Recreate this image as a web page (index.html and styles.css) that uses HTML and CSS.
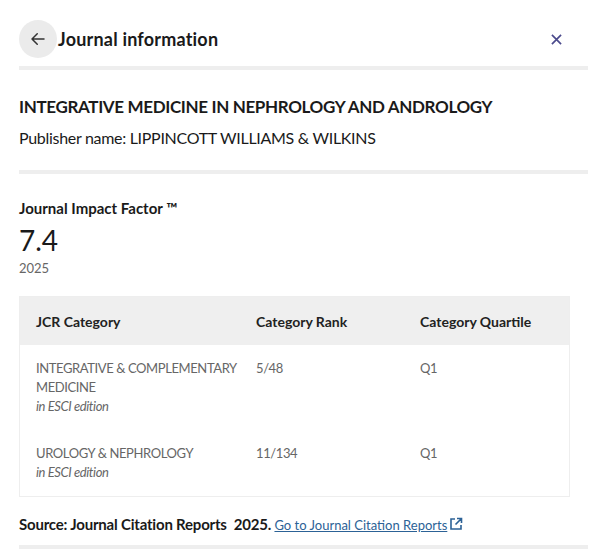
FILE: index.html
```html
<!DOCTYPE html>
<html lang="en">
<head>
    <meta charset="UTF-8">
    <title>Journal information</title>
    <link rel="stylesheet" href="styles.css">
</head>
<body>
    <div class="panel">
        <div class="header">
            <button class="back-btn" aria-label="Back">
                <svg width="18" height="18" viewBox="0 0 24 24"><path d="M20 12H5M11 5l-7 7 7 7" fill="none" stroke="#333" stroke-width="2" stroke-linecap="round" stroke-linejoin="round"/></svg>
            </button>
            <h1 class="title">Journal information</h1>
            <button class="close-btn" aria-label="Close">
                <svg width="11" height="11" viewBox="0 0 12 12"><path d="M1 1l10 10M11 1L1 11" stroke="#4b4a8c" stroke-width="1.8"/></svg>
            </button>
        </div>

        <div class="journal">
            <h2 class="journal-name">INTEGRATIVE MEDICINE IN NEPHROLOGY AND ANDROLOGY</h2>
            <p class="publisher">Publisher name: LIPPINCOTT WILLIAMS &amp; WILKINS</p>
        </div>

        <div class="impact">
            <h3 class="impact-label">Journal Impact Factor ™</h3>
            <div class="impact-value">7.4</div>
            <div class="impact-year">2025</div>

            <table class="jcr">
                <thead>
                    <tr>
                        <th class="col-cat">JCR Category</th>
                        <th class="col-rank">Category Rank</th>
                        <th>Category Quartile</th>
                    </tr>
                </thead>
                <tbody>
                    <tr>
                        <td>INTEGRATIVE &amp; COMPLEMENTARY MEDICINE<br><em>in ESCI edition</em></td>
                        <td>5/48</td>
                        <td>Q1</td>
                    </tr>
                    <tr>
                        <td>UROLOGY &amp; NEPHROLOGY<br><em>in ESCI edition</em></td>
                        <td>11/134</td>
                        <td>Q1</td>
                    </tr>
                </tbody>
            </table>

            <p class="source">Source: Journal Citation Reports&nbsp; 2025. <a href="#">Go to Journal Citation Reports</a><svg class="ext" width="14" height="14" viewBox="0 0 14 14"><path d="M6 2H2v10h10V8M8 1.5h4.5V6M12.5 1.5L6.5 7.5" fill="none" stroke="#2c6296" stroke-width="1.6"/></svg></p>
        </div>
    </div>
</body>
</html>
```

FILE: styles.css
```css
body {
    margin: 0;
    background: #fff;
    font-family: Lato, "Noto Sans", sans-serif;
    color: #1a1a1a;
}

.panel {
    width: 569px;
    margin-left: 19px;
}

.header {
    display: flex;
    align-items: center;
    height: 66px;
    border-bottom: 4px solid #eee;
}

.back-btn {
    width: 38px;
    height: 38px;
    border-radius: 50%;
    border: none;
    background: #ebebeb;
    display: flex;
    align-items: center;
    justify-content: center;
    padding: 0;
    margin-top: 12px;
}

.title {
    font-size: 18px;
    font-weight: 700;
    margin: 12px 0 0 1px;
    flex: 1;
    letter-spacing: 0.2px;
}

.close-btn {
    border: none;
    background: none;
    padding: 0;
    margin: 12px 26px 0 0;
    display: flex;
}

.journal {
    padding: 26px 0 23px;
    border-bottom: 4px solid #eee;
}

.journal-name {
    font-size: 17px;
    font-weight: 700;
    letter-spacing: -0.35px;
    margin: 0 0 11px;
}

.publisher {
    font-size: 16px;
    letter-spacing: -0.3px;
    margin: 0;
}

.impact {
    padding-top: 25px;
    border-bottom: 4px solid #eee;
}

.impact-label {
    font-size: 15px;
    font-weight: 700;
    margin: 0 0 6px;
}

.impact-value {
    font-size: 28px;
    line-height: 34px;
    margin-top: 1px;
}

.impact-year {
    font-size: 13px;
    color: #666;
    margin-top: 3px;
}

.jcr {
    width: 551px;
    margin-top: 20px;
    border-collapse: collapse;
    table-layout: fixed;
    border: 1px solid #eee;
    font-size: 13px;
}

.jcr th {
    background: #efefef;
    text-align: left;
    font-weight: 700;
    font-size: 14px;
    height: 48px;
    padding: 0 0 0 16px;
    color: #222;
}

.jcr td {
    vertical-align: top;
    padding: 13px 0 14px 16px;
    color: #666;
    line-height: 19px;
    letter-spacing: -0.4px;
}

.jcr tbody tr:first-child td {
    padding-top: 14px;
    padding-bottom: 15px;
}

.jcr .col-cat {
    width: 204px;
}

.jcr .col-rank {
    width: 148px;
}

.jcr em {
    font-style: italic;
}

.source {
    font-size: 15px;
    font-weight: 700;
    letter-spacing: -0.2px;
    margin: 18px 0 12px;
}

.source a {
    font-size: 13px;
    font-weight: 400;
    letter-spacing: 0;
    color: #2c6296;
}

.ext {
    vertical-align: -1px;
    margin-left: 2px;
}
```
